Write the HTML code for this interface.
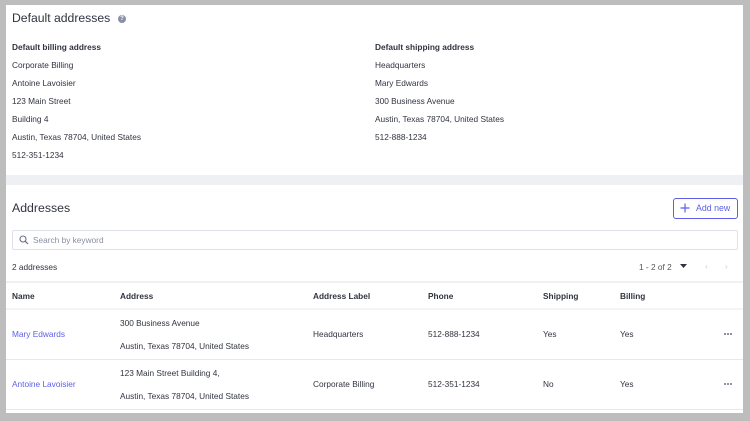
<!DOCTYPE html>
<html><head><style>
*{margin:0;padding:0;box-sizing:border-box}
body{width:750px;height:421px;background:#bdbdbd;font-family:"Liberation Sans",sans-serif;color:#313440;position:relative;overflow:hidden;font-size:8.3px}
.a{position:absolute;white-space:nowrap}
.card{position:absolute;left:6px;width:737px;background:#fff}
.b{font-weight:bold}
.lk{color:#5d5fe8}
.dots{position:absolute;width:11px;height:3px}
.dots i{position:absolute;top:0;width:2px;height:2px;background:#6b6f80;border-radius:1px}
</style></head><body>
<div class="card" style="top:5px;height:170px"></div>
<div class="a" style="left:6px;top:175px;width:737px;height:10px;background:#eef0f4"></div>
<div class="card" style="top:185px;height:228px"></div>

<div class="a" style="left:12px;top:11px;font-size:12.2px;color:#313440">Default addresses</div>
<div class="a" style="left:118px;top:15px;width:8px;height:8px;border-radius:50%;background:#8a8fa8;color:#fff;font-size:6px;text-align:center;line-height:8px;font-weight:bold">?</div>

<div class="a b" style="left:12px;top:42px">Default billing address</div>
<div class="a" style="left:12px;top:60px">Corporate Billing</div>
<div class="a" style="left:12px;top:78px">Antoine Lavoisier</div>
<div class="a" style="left:12px;top:96px">123 Main Street</div>
<div class="a" style="left:12px;top:114px">Building 4</div>
<div class="a" style="left:12px;top:132px">Austin, Texas 78704, United States</div>
<div class="a" style="left:12px;top:150px">512-351-1234</div>

<div class="a b" style="left:375px;top:42px">Default shipping address</div>
<div class="a" style="left:375px;top:60px">Headquarters</div>
<div class="a" style="left:375px;top:78px">Mary Edwards</div>
<div class="a" style="left:375px;top:96px">300 Business Avenue</div>
<div class="a" style="left:375px;top:114px">Austin, Texas 78704, United States</div>
<div class="a" style="left:375px;top:132px">512-888-1234</div>

<div class="a" style="left:12px;top:201px;font-size:12.3px">Addresses</div>
<div class="a" style="left:673px;top:198px;width:65px;height:21px;border:1px solid #5d5fe8;border-radius:3px;color:#5d5fe8;font-size:8.8px;line-height:19px;padding-left:22px">Add new</div>
<svg class="a" style="left:680px;top:203px" width="10" height="10"><path d="M5 0.5V9.5M0.5 5H9.5" stroke="#5d5fe8" stroke-width="1.2"/></svg>

<div class="a" style="left:12px;top:230px;width:726px;height:20px;border:1px solid #dfe1e8;border-radius:2px"></div>
<svg class="a" style="left:19px;top:235px" width="10" height="10"><circle cx="4" cy="4" r="3" fill="none" stroke="#6b6f80" stroke-width="1.1"/><path d="M6.2 6.2L9 9" stroke="#6b6f80" stroke-width="1.2"/></svg>
<div class="a" style="left:33px;top:235px;color:#8a8ea0">Search by keyword</div>

<div class="a" style="left:12px;top:262px">2 addresses</div>
<div class="a" style="left:639px;top:262px;color:#555">1 - 2 of 2</div>
<svg class="a" style="left:680px;top:264px" width="7" height="5"><path d="M0 0H7L3.5 4z" fill="#313440"/></svg>
<div class="a" style="left:705px;top:261px;color:#ccd">‹</div>
<div class="a" style="left:725px;top:261px;color:#ccd">›</div>

<div class="a" style="left:6px;top:281px;width:737px;height:2px;background:#eef0f4"></div>
<div class="a b" style="left:12px;top:291px">Name</div>
<div class="a b" style="left:120px;top:291px">Address</div>
<div class="a b" style="left:313px;top:291px">Address Label</div>
<div class="a b" style="left:428px;top:291px">Phone</div>
<div class="a b" style="left:543px;top:291px">Shipping</div>
<div class="a b" style="left:620px;top:291px">Billing</div>
<div class="a" style="left:6px;top:308px;width:737px;height:2px;background:#f3f4f7"></div>

<div class="a lk" style="left:12px;top:329px">Mary Edwards</div>
<div class="a" style="left:120px;top:318px">300 Business Avenue</div>
<div class="a" style="left:120px;top:341px">Austin, Texas 78704, United States</div>
<div class="a" style="left:313px;top:329px">Headquarters</div>
<div class="a" style="left:428px;top:329px">512-888-1234</div>
<div class="a" style="left:543px;top:329px">Yes</div>
<div class="a" style="left:620px;top:329px">Yes</div>
<div class="dots" style="left:724px;top:333px"><i style="left:0"></i><i style="left:3px"></i><i style="left:6px"></i></div>
<div class="a" style="left:6px;top:359px;width:737px;height:1px;background:#e6e8ed"></div>

<div class="a lk" style="left:12px;top:379px">Antoine Lavoisier</div>
<div class="a" style="left:120px;top:368px">123 Main Street Building 4,</div>
<div class="a" style="left:120px;top:391px">Austin, Texas 78704, United States</div>
<div class="a" style="left:313px;top:379px">Corporate Billing</div>
<div class="a" style="left:428px;top:379px">512-351-1234</div>
<div class="a" style="left:543px;top:379px">No</div>
<div class="a" style="left:620px;top:379px">Yes</div>
<div class="dots" style="left:724px;top:383px"><i style="left:0"></i><i style="left:3px"></i><i style="left:6px"></i></div>
<div class="a" style="left:6px;top:409px;width:737px;height:1px;background:#e6e8ed"></div>
</body></html>
